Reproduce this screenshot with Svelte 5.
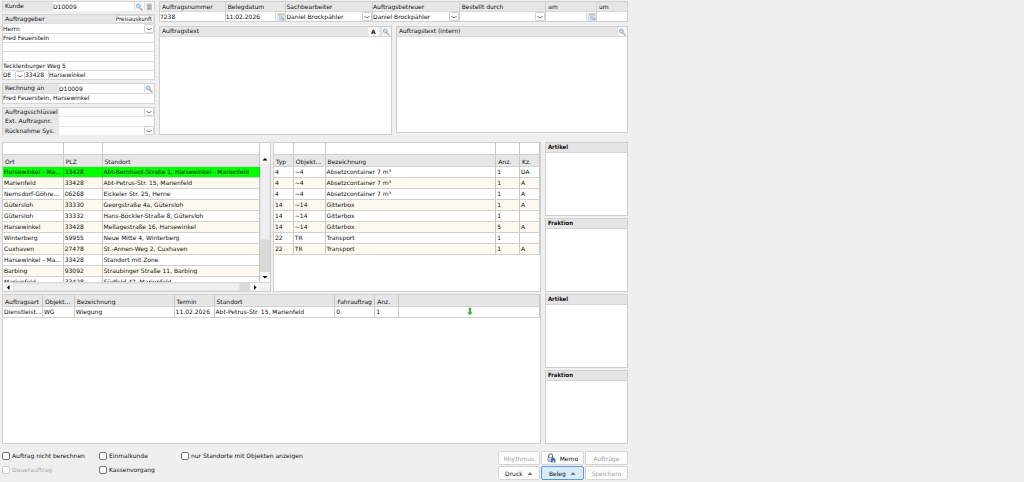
<script>
  const sites = [
    ['Harsewinkel - Ma...', '33428', 'Abt-Bernhard-Straße 1, Harsewinkel - Marienfeld'],
    ['Marienfeld', '33428', 'Abt-Petrus-Str. 15, Marienfeld'],
    ['Nemsdorf-Göhre...', '06268', 'Eickeler Str. 25, Herne'],
    ['Gütersloh', '33330', 'Georgstraße 4a, Gütersloh'],
    ['Gütersloh', '33332', 'Hans-Böckler-Straße 8, Gütersloh'],
    ['Harsewinkel', '33428', 'Mellagestraße 16, Harsewinkel'],
    ['Winterberg', '59955', 'Neue Mitte 4, Winterberg'],
    ['Cuxhaven', '27478', 'St.-Annen-Weg 2, Cuxhaven'],
    ['Harsewinkel - Ma...', '33428', 'Standort mit Zone'],
    ['Barbing', '93092', 'Straubinger Straße 11, Barbing'],
    ['Marienfeld', '33428', 'Südfeld 47, Marienfeld']
  ];
  const objects = [
    ['4', '~4', 'Absetzcontainer 7 m³', '1', 'DA'],
    ['4', '~4', 'Absetzcontainer 7 m³', '1', 'A'],
    ['4', '~4', 'Absetzcontainer 7 m³', '1', 'A'],
    ['14', '~14', 'Gitterbox', '1', 'A'],
    ['14', '~14', 'Gitterbox', '1', ''],
    ['14', '~14', 'Gitterbox', '5', 'A'],
    ['22', 'TR', 'Transport', '1', ''],
    ['22', 'TR', 'Transport', '1', 'A']
  ];
  const siteCols = [['Ort', 61], ['PLZ', 39], ['Standort', 158]];
  const objectCols = [['Typ', 20], ['Objekt...', 32], ['Bezeichnung', 172], ['Anz.', 24], ['Kz.', 20]];
  const orderCols = [['Auftragsart', 40], ['Objekt...', 32], ['Bezeichnung', 100], ['Termin', 40], ['Standort', 121], ['Fahrauftrag', 40], ['Anz.', 24], ['', 141]];
  const share = (cols, width) => (width / cols.reduce((sum, c) => sum + c[1], 0)) * 100 + '%';
</script>

{#snippet lens()}
  <svg class="icon" viewBox="0 0 16 16" aria-hidden="true">
    <path d="M9 9l5 5" stroke="#c4a184" stroke-width="2.6" stroke-linecap="round" />
    <circle cx="6.5" cy="6" r="4" fill="#c4def4" stroke="#8aa5c2" stroke-width="1.6" />
  </svg>
{/snippet}

{#snippet calendar()}
  <svg class="icon" viewBox="0 0 16 16" aria-hidden="true">
    <rect x="1.5" y="1.5" width="13" height="13" fill="#e4eef6" stroke="#b4c3cf" />
    <rect x="2" y="2" width="12" height="3" fill="#d3bfa6" />
    <path d="M4 8h9M4 11h9M6 6v8M10 6v8" stroke="#9bbbd5" stroke-width="1.2" />
    <path d="M9 14h5V9z" fill="#8fadc8" />
  </svg>
{/snippet}

{#snippet pick(name, value)}
  <span class="pick">
    <select aria-label={name}><option>{value}</option></select>
    <svg class="chev" viewBox="0 0 10 9" aria-hidden="true">
      <rect x="0.5" y="0.5" width="9" height="8" rx="1" fill="#fdfdfd" stroke="#d0d0d0" />
      <path d="M2.5 4Q5 7.500 7.500 4" fill="none" stroke="#707070" />
    </svg>
  </span>
{/snippet}

{#snippet head(cols, filter)}
  <colgroup>
    {#each cols as col}<col style:width={share(cols, col[1])} />{/each}
  </colgroup>
  <thead>
    {#if filter}
      <tr class="filter">
        {#each cols as col}<td><input aria-label={'Filter ' + col[0]} /></td>{/each}
      </tr>
    {/if}
    <tr>{#each cols as col}<th>{col[0]}</th>{/each}</tr>
  </thead>
{/snippet}

{#snippet side()}
  <aside class="side">
    <section class="box"><h2>Artikel</h2><div class="blank"></div></section>
    <section class="box"><h2>Fraktion</h2><div class="blank"></div></section>
  </aside>
{/snippet}

<main class="app">
  <div class="top">
    <form class="customer">
      <div class="group">
        <div class="row">
          <label class="cap" for="kunde">Kunde</label>
          <input id="kunde" value="D10009" />
          <button type="button" class="tool" aria-label="Kunde suchen">{@render lens()}</button>
          <button type="button" class="tool" aria-label="Kundendaten">
            <svg class="icon" viewBox="0 0 16 16" aria-hidden="true"><rect x="3" y="1" width="11" height="14" rx="2" fill="#c4c4c4" /><path d="M6 5h5M6 8h5M6 11h5" stroke="#8f8f8f" stroke-width="1.500" /></svg>
          </button>
        </div>
      </div>
      <div class="group address">
        <div class="row title"><span>Auftraggeber</span><button type="button" class="price">Preisauskunft</button></div>
        <div class="row">{@render pick('Anrede', 'Herrn')}</div>
        <div class="row"><input aria-label="Name" value="Fred Feuerstein" /></div>
        <div class="row"><input aria-label="Namenszusatz 1" /></div>
        <div class="row"><input aria-label="Namenszusatz 2" /></div>
        <div class="row"><input aria-label="Straße" value="Tecklenburger Weg 5" /></div>
        <div class="row place">
          {@render pick('Land', 'DE')}
          <input aria-label="Postleitzahl" value="33428" />
          <input aria-label="Ort" value="Harsewinkel" />
        </div>
      </div>
      <div class="group pair">
        <div class="row">
          <label class="cap wide" for="rechnung">Rechnung an</label>
          <input id="rechnung" value="D10009" />
          <button type="button" class="tool" aria-label="Rechnungsempfänger suchen">{@render lens()}</button>
        </div>
        <div class="row"><input aria-label="Rechnungsempfänger" value="Fred Feuerstein, Harsewinkel" /></div>
      </div>
      <div class="group triple">
        <div class="row"><span class="cap wide">Auftragsschlüssel</span>{@render pick('Auftragsschlüssel', '')}</div>
        <div class="row"><label class="cap wide" for="ext">Ext. Auftragsnr.</label><input id="ext" /></div>
        <div class="row"><span class="cap wide">Rücknahme Sys.</span>{@render pick('Rücknahme Sys.', '')}</div>
      </div>
    </form>

    <div class="order">
      <div class="fields">
        <div class="field"><label for="nr">Auftragsnummer</label><span class="val"><input id="nr" value="7238" /></span></div>
        <div class="field"><label for="datum">Belegdatum</label><span class="val"><input id="datum" value="11.02.2026" /><button type="button" class="tool" aria-label="Belegdatum wählen">{@render calendar()}</button></span></div>
        <div class="field flush"><span>Sachbearbeiter</span><span class="val">{@render pick('Sachbearbeiter', 'Daniel Brockpähler')}</span></div>
        <div class="field flush"><span>Auftragsbetreuer</span><span class="val">{@render pick('Auftragsbetreuer', 'Daniel Brockpähler')}</span></div>
        <div class="field"><span>Bestellt durch</span><span class="val">{@render pick('Bestellt durch', '')}</span></div>
        <div class="field"><label for="am">am</label><span class="val"><input id="am" /><button type="button" class="tool" aria-label="Datum wählen">{@render calendar()}</button></span></div>
        <div class="field"><label for="um">um</label><span class="val"><input id="um" /></span></div>
      </div>
      <div class="texts">
        <section class="text">
          <div class="bar"><label for="text">Auftragstext</label><button type="button" class="letter" aria-label="Schrift">A</button><button type="button" class="tool" aria-label="Text öffnen">{@render lens()}</button></div>
          <textarea id="text"></textarea>
        </section>
        <section class="text">
          <div class="bar"><label for="intern">Auftragstext (intern)</label><button type="button" class="tool" aria-label="Internen Text öffnen">{@render lens()}</button></div>
          <textarea id="intern"></textarea>
        </section>
      </div>
    </div>
  </div>

  <div class="middle">
    <section class="grid sites">
      <div class="clip">
        <table>
          {@render head(siteCols, true)}
          <tbody>
            {#each sites as row, i}
              <tr class:chosen={i === 0}>{#each row as cell}<td>{cell}</td>{/each}</tr>
            {/each}
          </tbody>
        </table>
      </div>
      <div class="vbar">
        <span class="gap"></span>
        <button type="button" aria-label="Nach oben"><svg viewBox="0 0 10 10"><path d="M2.500 6.500L5 4l2.500 2.500z" /></svg></button>
        <span class="thumb"></span><span class="track"></span>
        <button type="button" aria-label="Nach unten"><svg viewBox="0 0 10 10"><path d="M2.500 4L5 6.500 7.500 4z" /></svg></button>
      </div>
      <div class="hbar">
        <button type="button" aria-label="Nach links"><svg viewBox="0 0 10 10"><path d="M6.500 2L4 4.500 6.500 7z" /></svg></button>
        <span class="thumb"></span><span class="track"></span>
        <button type="button" aria-label="Nach rechts"><svg viewBox="0 0 10 10"><path d="M4 2l2.500 2.500L4 7z" /></svg></button>
      </div>
    </section>
    <section class="grid">
      <table>
        {@render head(objectCols, true)}
        <tbody>
          {#each objects as row}<tr>{#each row as cell}<td>{cell}</td>{/each}</tr>{/each}
        </tbody>
      </table>
    </section>
    {@render side()}
  </div>

  <div class="lower">
    <section class="grid">
      <table>
        {@render head(orderCols, false)}
        <tbody>
          <tr>
            <td>Dienstleist...</td><td>WG</td><td>Wiegung</td><td>11.02.2026</td><td>Abt-Petrus-Str. 15, Marienfeld</td><td>0</td><td>1</td>
            <td class="mark"><svg viewBox="0 0 8 10" aria-label="Abwärts" role="img"><path d="M3 1h2v5h1.500L4 9 1.500 6H3z" fill="#43a047" stroke="#43a047" stroke-width="0.500" /></svg></td>
          </tr>
        </tbody>
      </table>
    </section>
    {@render side()}
  </div>

  <footer>
    <div class="checks">
      <label><input type="checkbox" />Auftrag nicht berechnen</label>
      <label><input type="checkbox" />Einmalkunde</label>
      <label><input type="checkbox" />nur Standorte mit Objekten anzeigen</label>
      <label class="off"><input type="checkbox" disabled />Dauerauftrag</label>
      <label><input type="checkbox" />Kassenvorgang</label>
    </div>
    <div class="actions">
      <button type="button" disabled>Rhythmus</button>
      <button type="button">
        <svg class="memo" viewBox="0 0 16 18" aria-hidden="true"><path d="M3 8V5a3.500 3.500 0 0 1 7 0v5" fill="none" stroke="#555" stroke-width="1.800" /><rect x="1.500" y="8" width="8" height="7" rx="1" fill="#d5d5d5" stroke="#666" /><path d="M7 17v-6l4-3 4 3v6h-3v-3h-2v3z" fill="#2474b8" /></svg>
        Memo
      </button>
      <button type="button" disabled>Aufträge</button>
      <button type="button">Druck <svg class="up" viewBox="0 0 6 5" aria-hidden="true"><path d="M0.500 4L3 1l2.500 3z" /></svg></button>
      <button type="button" class="active">Beleg <svg class="up" viewBox="0 0 6 5" aria-hidden="true"><path d="M0.500 4L3 1l2.500 3z" /></svg></button>
      <button type="button" disabled>Speichern</button>
    </div>
  </footer>
</main>

<style>
  :global(body) { background: #efefef; }
  .app, .app * { box-sizing: border-box; }
  .app {
    width: 62%;
    min-width: 600px;
    padding: 1px 7px 0 2px;
    color: #111;
    font: 6px/9px "DejaVu Sans", Verdana, sans-serif;
  }
  input, select, textarea, button { font: inherit; color: inherit; margin: 0; padding: 0; border: 0; border-radius: 0; }
  input, select { display: block; width: 100%; min-width: 0; background: #fff; appearance: none; }
  input, select, textarea { outline: 0; }
  svg { display: block; }

  .top { display: grid; grid-template-columns: 153fr 469fr; gap: 4px; }
  .customer { display: flex; flex-direction: column; gap: 3px; line-height: 8px; }
  .group { display: flex; flex-direction: column; flex: 1; min-height: 0; border: 1px solid #d4d4d4; border-bottom: 0; }
  .address { flex: 7; border-bottom: 1px solid #d4d4d4; }
  .pair { flex: 2; border-bottom: 1px solid #d4d4d4; }
  .triple { flex: 3; }
  .row { display: flex; flex: 1; min-height: 0; background: #fff; }
  .row + .row { border-top: 1px solid #dcdcdc; }
  .cap { flex: 0 0 50px; padding-left: 2px; background: #e6e6e6; white-space: nowrap; }
  .cap.wide { flex-basis: 56px; }
  .triple .row { border-top-color: #e6e6e6; }
  .title { justify-content: space-between; padding-left: 2px; background: #e6e6e6; }
  .price { padding: 0 1px; background: #fcfcfc; border: 1px solid #dadada; border-radius: 2px; font-family: "DejaVu Sans Condensed", sans-serif; line-height: 6px; }
  .place > :global(.pick) { flex: 0 0 22px; }
  .place input { flex: 1; }
  .place input:nth-of-type(1) { flex: 0 0 24px; border-right: 1px solid #dcdcdc; }

  .pick { display: flex; flex: 1; min-width: 0; background: #fff; }
  .pick select { flex: 1; }
  .chev { flex: 0 0 10px; align-self: center; width: 10px; height: 9px; margin: -1px 0; }
  .tool { display: grid; place-items: center; flex: 0 0 10px; background: #f8f8f8; border-left: 1px solid #dedede; border-radius: 2px; }
  .icon { width: 8px; height: 8px; }

  .fields { display: grid; grid-template-columns: 65fr 61fr 87fr 87fr 87fr 51fr 31fr; border: 1px solid #d0d0d0; }
  .field { display: flex; flex-direction: column; min-width: 0; background: #e6e6e6; }
  .field + .field { border-left: 1px solid #d0d0d0; }
  .field > :first-child { height: 9px; padding-left: 2px; white-space: nowrap; }
  .field.flush > :first-child { padding-left: 0; }
  .val { display: flex; height: 10px; border-top: 1px solid #d8d8d8; }
  .texts { display: grid; grid-template-columns: 233fr 232fr; gap: 4px; align-items: start; padding-top: 4px; }
  .text { border: 1px solid #d0d0d0; background: #e6e6e6; }
  .bar { display: flex; gap: 2px; height: 10px; padding-left: 2px; border-bottom: 1px solid #d8d8d8; line-height: 8px; }
  .bar label { flex: 1; }
  .letter { flex: 0 0 11px; background: #fafafa; border-radius: 2px; font-weight: bold; }
  textarea { display: block; width: 100%; height: 97px; background: #fff; resize: none; }
  .text:last-child textarea { height: 95px; }

  .middle, .lower { display: grid; height: 150px; }
  .middle { grid-template-columns: 269fr 268fr 85fr; gap: 2px; margin-top: 7px; }
  .middle > :global(.side) { margin-left: 2px; }
  .lower { grid-template-columns: 539fr 83fr; gap: 4px; margin-top: 2px; }
  .grid { min-width: 0; background: #fff; border: 1px solid #d0d0d0; overflow: hidden; }
  .sites { display: grid; grid-template: 1fr 9px / 1fr 10px; }
  .clip { min-height: 0; overflow: hidden; }
  table { width: 100%; table-layout: fixed; border-collapse: separate; border-spacing: 0; }
  th, td {
    height: 11px; padding: 0 0 0 1px; overflow: hidden; white-space: nowrap; vertical-align: top;
    text-align: left; font-weight: normal; border-right: 1px solid #c8c8c8; border-bottom: 1px solid #d2d2d2;
  }
  th { height: 12px; padding: 2px 0 0 2px; background: #e6e6e6; }
  .filter td { height: 12px; padding: 0; background: #fff; }
  tbody tr:nth-child(even) td { background: #fdf9ef; }
  tbody .chosen td { background: #00ff00; border-right-color: #00e000; }
  .mark svg { width: 8px; height: 9px; margin: 0 auto; }

  .vbar, .hbar { display: flex; background: #f0f0f0; }
  .vbar { flex-direction: column; }
  .hbar { grid-column: 1 / 3; padding-right: 10px; border-top: 1px solid #dcdcdc; overflow: hidden; }
  .vbar .gap { flex: 0 0 11px; background: #fff; }
  .vbar button, .hbar button { flex: 0 0 10px; background: #f8f8f8; }
  .thumb { flex: 75; background: #efefef; border: 1px solid #e2e2e2; }
  .track { flex: 32; background: #dadada; }
  .hbar .thumb { flex: 227; }
  .hbar .track { flex: 10; }

  .side { display: grid; grid-template-rows: 1fr 1fr; gap: 2px; }
  .box { display: flex; flex-direction: column; border: 1px solid #d0d0d0; background: #fff; }
  h2 { margin: 0; height: 10px; padding-left: 2px; font: bold 6px/8px "DejaVu Sans Condensed", sans-serif; background: #e6e6e6; border-bottom: 1px solid #d4d4d4; }

  footer { display: flex; justify-content: space-between; padding-top: 7px; }
  .checks { display: grid; grid-template-columns: 97px 82px auto; grid-auto-rows: 14px; }
  .checks label { display: flex; gap: 2px; line-height: 10px; }
  .checks input { flex: none; width: 8px; height: 8px; margin-top: 1px; border: 1px solid #777; border-radius: 2px; }
  .off { color: #a8a8a8; }
  .off input { border-color: #d0d0d0; }
  .actions { display: grid; grid-template-columns: 42px 43px 43px; grid-auto-rows: 14px; gap: 1px; }
  .actions button { display: flex; align-items: center; justify-content: center; gap: 4px; background: #fdfdfd; border: 1px solid #d6d6d6; border-radius: 2px; }
  .actions button:disabled { color: #a0a0a0; }
  .actions .active { background: #d9eafa; border-color: #5b9bd5; }
  .memo { width: 9px; height: 10px; }
  .up { width: 6px; height: 5px; fill: #777; }
</style>
